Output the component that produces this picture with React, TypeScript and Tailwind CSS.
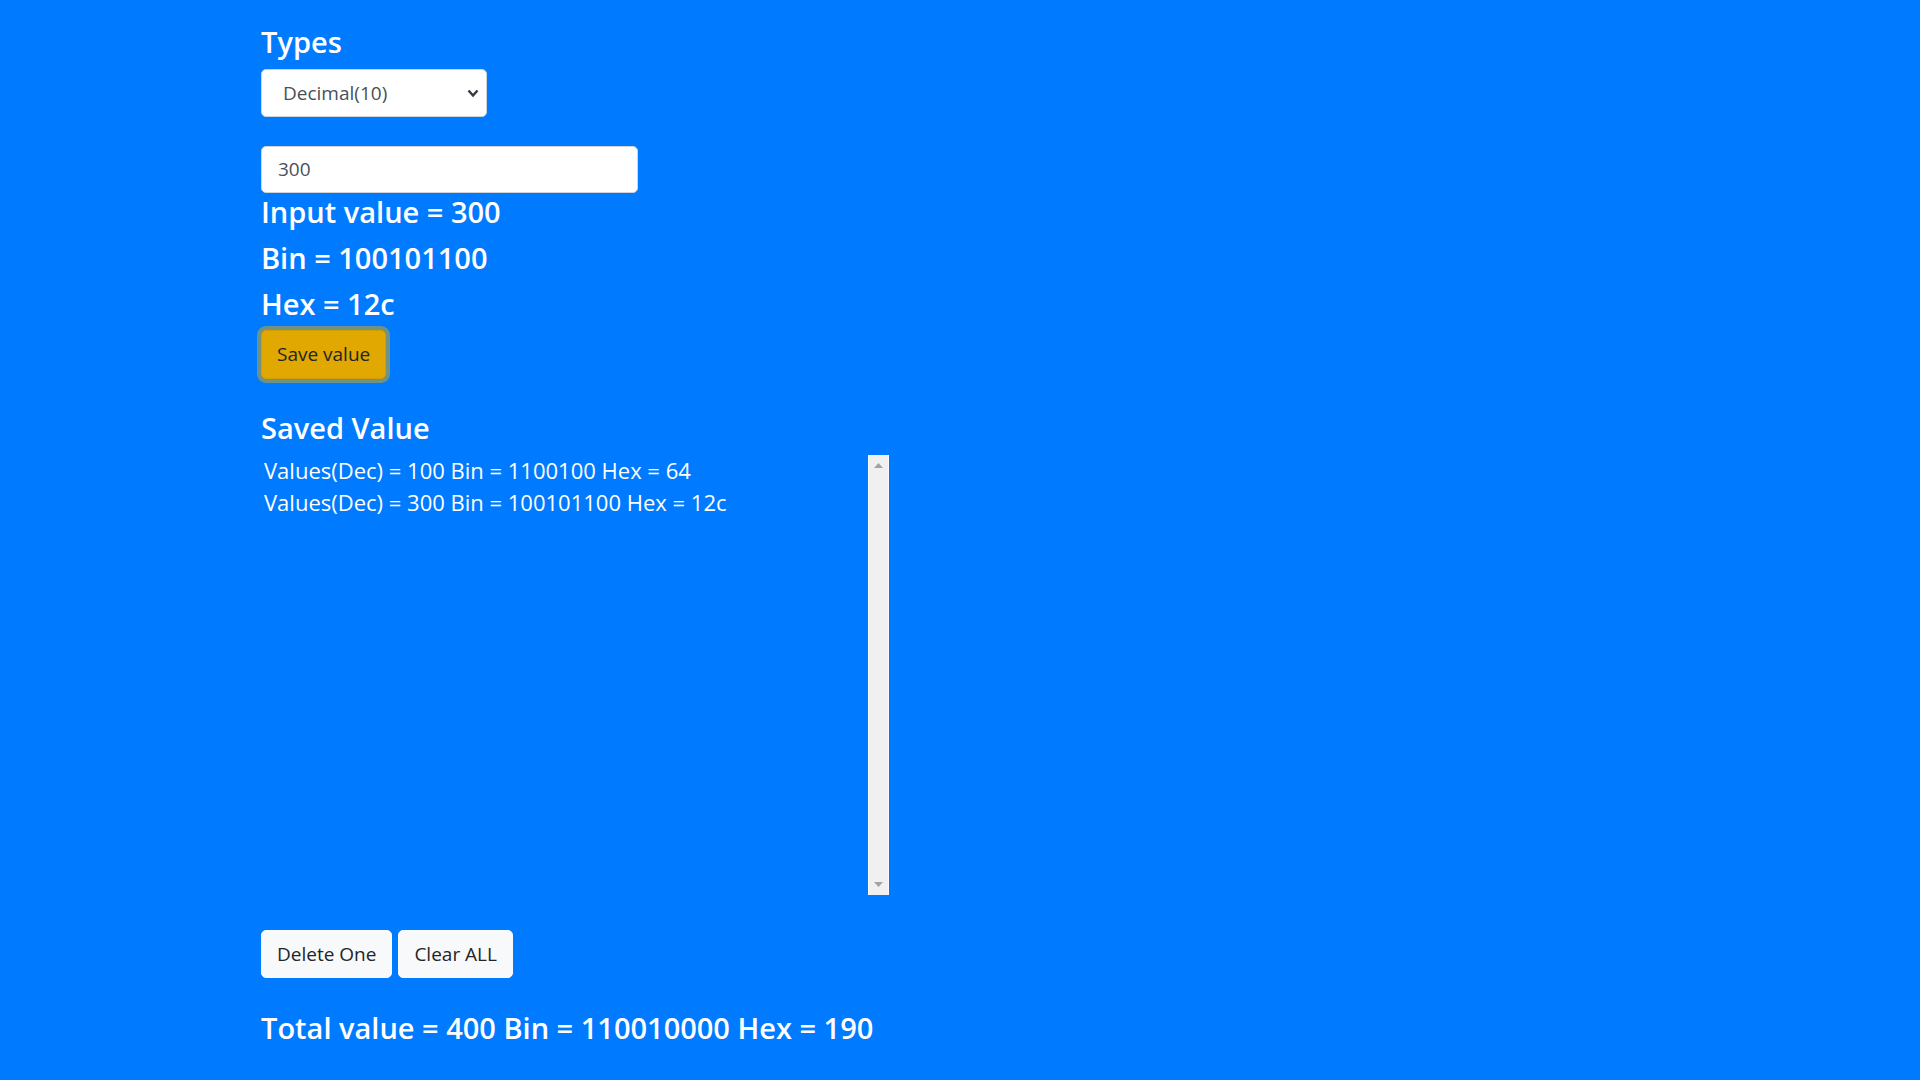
import React from "react";

const font = { fontFamily: '"Open Sans", "Noto Sans", sans-serif' };

function Heading({ children }: { children: React.ReactNode }) {
  return (
    <h4 className="pt-[1px] text-[29px] leading-[36px] font-semibold text-white mb-[9px]">{children}</h4>
  );
}

export default function App() {
  return (
    <div className="min-h-[1080px] w-[1920px] bg-[#007bff]" style={font}>
      <div className="pl-[261px] pt-[23px] flex flex-col items-start">
        <Heading>Types</Heading>
        <div className="relative w-[226px] h-[48px] bg-white border border-[#ced4da] rounded-[5px] flex items-center pl-[21px] text-[19px] text-[#495057]">
          Decimal(10)
          <svg className="absolute right-[7px] top-[19px]" width="12" height="9" viewBox="0 0 12 9">
            <path d="M1.5 1.5 L6 6.5 L10.5 1.5" fill="none" stroke="#343a40" strokeWidth="2.4" />
          </svg>
        </div>
        <div className="mt-[29px] w-[377px] h-[47px] bg-white border border-[#ced4da] rounded-[5px] flex items-center pl-[16px] text-[19px] text-[#495057]">
          300
        </div>
        <Heading>Input value = 300</Heading>
        <Heading>Bin = 100101100</Heading>
        <Heading>Hex = 12c</Heading>
        <div className="mt-[-1px] h-[49px] px-[15px] flex items-center rounded-[5px] bg-[#e0a800] border border-[#d39e00] text-[19px] text-[#212529] shadow-[0_0_0_4px_rgba(111,146,133,1)]">
          Save value
        </div>
        <div className="mt-[30px]">
          <Heading>Saved Value</Heading>
        </div>
        <div className="w-[628px] h-[440px] flex">
          <div className="flex-1 pl-[3px] text-[22px] leading-[32px] text-white -mt-[1px]">
            <div>Values(Dec) = 100 Bin = 1100100 Hex = 64</div>
            <div>Values(Dec) = 300 Bin = 100101100 Hex = 12c</div>
          </div>
          <div className="w-[21px] h-full bg-[#f0f0f0] border-x border-[#fafafa] flex flex-col items-center justify-between py-[8px]">
            <svg width="9" height="5" viewBox="0 0 9 5"><path d="M0 5 L4.5 0 L9 5 Z" fill="#a3a3a3" /></svg>
            <svg width="9" height="5" viewBox="0 0 9 5"><path d="M0 0 L4.5 5 L9 0 Z" fill="#a3a3a3" /></svg>
          </div>
        </div>
        <div className="mt-[35px] flex gap-[6px]">
          <div className="h-[48px] px-[15px] flex items-center rounded-[5px] bg-[#f8f9fa] border border-[#f8f9fa] text-[19px] text-[#212529]">Delete One</div>
          <div className="h-[48px] px-[15px] flex items-center rounded-[5px] bg-[#f8f9fa] border border-[#f8f9fa] text-[19px] text-[#212529]">Clear ALL</div>
        </div>
        <div className="mt-[31px]">
          <Heading>Total value = 400 Bin = 110010000 Hex = 190</Heading>
        </div>
      </div>
    </div>
  );
}
